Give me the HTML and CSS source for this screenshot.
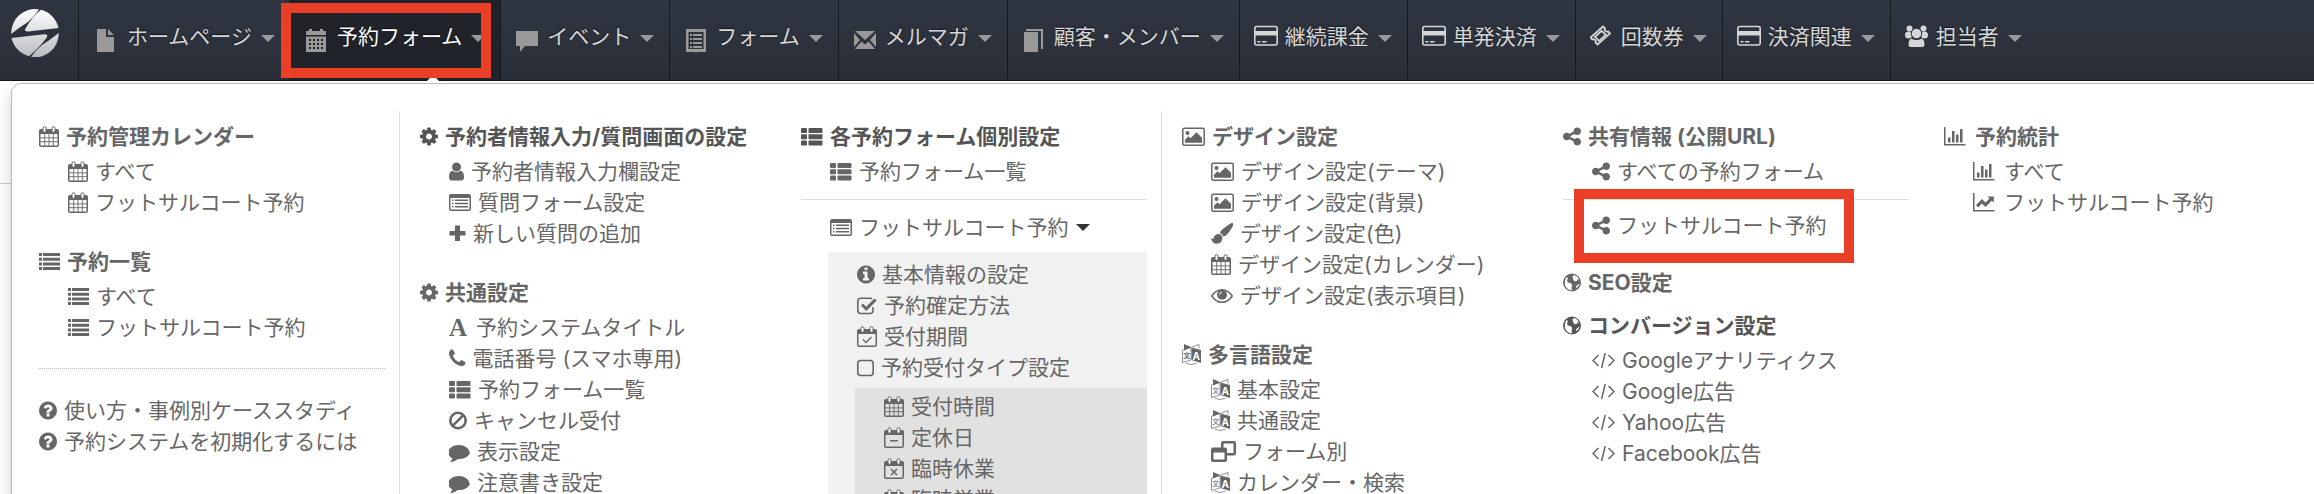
FILE: index.html
```html
<!DOCTYPE html>
<html lang="ja">
<head>
    <meta charset="UTF-8">
    <meta name="viewport" content="width=device-width, initial-scale=1.0">
    <title>予約フォーム</title>
    <link rel="stylesheet" href="styles.css">
</head>
<body>
    <!-- アイコン定義 -->
    <svg class="icon-defs" aria-hidden="true">
        <defs>
            <g id="i-cal-base">
                <path fill-rule="evenodd" d="M2 3h16q2 0 2 2v14q0 2-2 2h-16q-2 0-2-2v-14q0-2 2-2zM1.5 8v11.5h17v-11.5z"/>
                <rect x="4" y=".7" width="3" height="5.6" rx="1.5" fill="#fff" stroke="currentColor"/>
                <rect x="13" y=".7" width="3" height="5.6" rx="1.5" fill="#fff" stroke="currentColor"/>
            </g>
            <g id="i-cal-grid">
                <use href="#i-cal-base"/>
                <path d="M1 11.9h18M1 15.7h18M5.7 8v12M10 8v12M14.3 8v12" fill="none" stroke="currentColor" stroke-width=".9"/>
            </g>
            <g id="i-cal-check">
                <use href="#i-cal-base"/>
                <path d="M6 13.5l3 3 5.5-5.5" fill="none" stroke="currentColor" stroke-width="1.4"/>
            </g>
            <g id="i-cal-minus">
                <use href="#i-cal-base"/>
                <path d="M6 13.8h8" fill="none" stroke="currentColor" stroke-width="1.5"/>
            </g>
            <g id="i-cal-times">
                <use href="#i-cal-base"/>
                <path d="M7 11l6 6M13 11l-6 6" fill="none" stroke="currentColor" stroke-width="1.6"/>
            </g>
            <path id="i-cog" d="M1152 896q0-106-75-181t-181-75-181 75-75 181 75 181 181 75 181-75 75-181zm512-109v222q0 12-8 23t-20 13l-185 28q-19 54-39 91 35 50 107 138 10 12 10 25t-9 23q-27 37-99 108t-94 71q-12 0-26-9l-138-108q-44 23-91 38-16 136-29 186-7 28-36 28h-222q-14 0-24.5-8.5t-11.5-21.5l-28-184q-49-16-90-37l-141 107q-10 9-25 9-14 0-25-11-126-114-165-168-7-10-7-23 0-12 8-23 15-21 51-66.5t54-70.5q-27-50-41-99l-183-27q-13-2-21-12.5t-8-23.5v-222q0-12 8-23t19-13l186-28q14-46 39-92-40-57-107-138-10-12-10-24 0-10 9-23 26-36 98.5-107.5t94.5-71.5q13 0 26 10l138 107q44-23 91-38 16-136 29-186 7-28 36-28h222q14 0 24.5 8.5t11.5 21.5l28 184q49 16 90 37l142-107q9-9 24-9 13 0 25 10 129 119 165 170 7 8 7 22 0 12-8 23-15 21-51 66.5t-54 70.5q26 50 41 98l183 28q13 2 21 12.5t8 23.5z"/>
            <path id="i-user" d="M1536 1399q0 109-62.5 187t-150.5 78h-854q-88 0-150.5-78t-62.5-187q0-85 8.5-160.5t31.5-152 58.5-131 94-89 134.5-34.5q131 128 313 128t313-128q76 0 134.5 34.5t94 89 58.5 131 31.5 152 8.5 160.5zm-256-887q0 159-112.5 271.5t-271.5 112.5-271.5-112.5-112.5-271.5 112.5-271.5 271.5-112.5 271.5 112.5 112.5 271.5z"/>
            <path id="i-comment" d="M1792 896q0 174-120 321.5t-326 233-450 85.5q-70 0-145-8-198 175-460 242-49 14-114 22-17 2-30.5-9t-17.5-29q-3-15 12-31 80-80 110-150 20-50 28-90-157-89-247.5-220t-90.5-281q0-130 71-248.5t191-204.5 286-136.5 348-50.5q244 0 450 85.5t326 233 120 321.5z"/>
            <path id="i-phone" d="M1600 1240q0 27-10 70.5t-21 68.5q-21 50-122 106-94 51-186 51-27 0-53-3.5t-57.5-12.5-47-14.5-55.5-20.5-49-18q-98-35-175-83-127-79-264-216t-216-264q-48-77-83-175-3-9-18-49t-20.5-55.5-14.5-47-12.5-57.5-3.5-53q0-92 51-186 56-101 106-122 25-11 68.5-21t70.5-10q14 0 21 3 18 6 53 76 11 19 30 54t35 63.5 31 53.5q3 4 17.5 25t21.5 35.5 7 28.5q0 20-28.5 50t-62 55-62 53-28.5 46q0 9 5 22.5t8.5 20.5 14 24 11.5 19q76 137 174 235t235 174q2 1 19 11.5t24 14 20.5 8.5 22.5 5q18 0 46-28.5t53-62 55-62 50-28.5q14 0 28.5 7t35.5 21.5 25 17.5q25 15 53.5 31t63.5 35 54 30q70 35 76 53 3 7 3 21z"/>
            <path id="i-share" d="M1344 1024q133 0 226.5 93.5t93.5 226.5-93.5 226.5-226.5 93.5-226.5-93.5-93.5-226.5q0-12 2-34l-360-180q-92 86-218 86-133 0-226.5-93.5t-93.5-226.5 93.5-226.5 226.5-93.5q126 0 218 86l360-180q-2-22-2-34 0-133 93.5-226.5t226.5-93.5 226.5 93.5 93.5 226.5-93.5 226.5-226.5 93.5q-126 0-218-86l-360 180q2 22 2 34t-2 34l360 180q92-86 218-86z"/>
            <path id="i-question" d="M1024 1376v-192q0-14-9-23t-23-9h-192q-14 0-23 9t-9 23v192q0 14 9 23t23 9h192q14 0 23-9t9-23zm256-672q0-88-55.5-163t-138.5-116-170-41q-243 0-371 213-15 24 8 42l132 100q7 6 19 6 16 0 25-12 53-68 86-92 34-24 86-24 48 0 85.5 26t37.5 59q0 38-20 61t-68 45q-63 28-115.5 86.5t-52.5 125.5v36q0 14 9 23t23 9h192q14 0 23-9t9-23q0-19 21.5-49.5t54.5-49.5q32-18 49-28.5t46-35 44.5-48 28-60.5 12.5-81zm384 192q0 209-103 385.5t-279.5 279.5-385.5 103-385.5-103-279.5-279.5-103-385.5 103-385.5 279.5-279.5 385.5-103 385.5 103 279.5 279.5 103 385.5z"/>
            <path id="i-info" d="M1152 1376v-160q0-14-9-23t-23-9h-96v-512q0-14-9-23t-23-9h-320q-14 0-23 9t-9 23v160q0 14 9 23t23 9h96v320h-96q-14 0-23 9t-9 23v160q0 14 9 23t23 9h448q14 0 23-9t9-23zm-128-896v-160q0-14-9-23t-23-9h-192q-14 0-23 9t-9 23v160q0 14 9 23t23 9h192q14 0 23-9t9-23zm640 416q0 209-103 385.5t-279.5 279.5-385.5 103-385.5-103-279.5-279.5-103-385.5 103-385.5 279.5-279.5 385.5-103 385.5 103 279.5 279.5 103 385.5z"/>
            <path id="i-list" d="M0 2h3v3h-3zM4 2h17v3h-17zM0 6.7h3v3h-3zM4 6.7h17v3h-17zM0 11.4h3v3h-3zM4 11.4h17v3h-17zM0 16.1h3v3h-3zM4 16.1h17v3h-17z"/>
            <g id="i-th-list">
                <rect x="0" y="2" width="6" height="5" rx="1"/><rect x="7.5" y="2" width="14" height="5" rx="1"/>
                <rect x="0" y="8.3" width="6" height="5" rx="1"/><rect x="7.5" y="8.3" width="14" height="5" rx="1"/>
                <rect x="0" y="14.6" width="6" height="5" rx="1"/><rect x="7.5" y="14.6" width="14" height="5" rx="1"/>
            </g>
            <path id="i-list-alt" fill-rule="evenodd" d="M2 2h18q2 0 2 2v13q0 2-2 2h-18q-2 0-2-2v-13q0-2 2-2zM1.5 6v11q0 .5.5.5h18q.5 0 .5-.5v-11zM3 7.5h1.5v1.5h-1.5zM6 7.5h13v1.5h-13zM3 10.7h1.5v1.5h-1.5zM6 10.7h13v1.5h-13zM3 14h1.5v1.5h-1.5zM6 14h13v1.5h-13z"/>
            <path id="i-plus" d="M6 2.5h5v5.5h5.5v4.5h-5.5v5.5h-5v-5.5h-5.5v-4.5h5.5z"/>
            <g id="i-ban" fill="none" stroke="currentColor" stroke-width="2.6">
                <circle cx="9" cy="10.5" r="7.7"/><path d="M14.4 5.1l-10.8 10.8"/>
            </g>
            <g id="i-check">
                <path d="M16 12v3.5q0 3-3 3h-9.2q-3 0-3-3v-9.2q0-3 3-3h9.2q1 0 2 .5" fill="none" stroke="currentColor" stroke-width="1.6"/>
                <path d="M4 10.5l2-2 3.2 3.2 8.3-8.3 2.2 2.2-10.5 10.5z"/>
            </g>
            <rect id="i-square" x=".8" y="3.5" width="15.4" height="15" rx="3" fill="none" stroke="currentColor" stroke-width="1.6"/>
            <g id="i-image">
                <rect x=".8" y="2.3" width="21.4" height="17" rx="1.5" fill="none" stroke="currentColor" stroke-width="1.5"/>
                <circle cx="5.5" cy="7" r="2"/><path d="M3 16.8v-3l3.5-3.5 2 2 6-6 5.5 5.5v5z"/>
            </g>
            <g id="i-brush">
                <path d="M21.5 0q1.5 1 .3 3.2-2.8 5.5-6.3 8.8-1.5 1.4-3.2 1.6-.5-2.5-3.3-3.6.2-1.6 2-3.2 4.5-4 8.5-6.3 1.2-.8 2-.5z"/>
                <path d="M8 11q3.2.8 3.4 4-.2 5.5-5.7 5.8-4.7-.1-5.7-5.8 1.5 1.2 2.5.7.4-4.7 5.5-4.7z"/>
            </g>
            <g id="i-eye">
                <path d="M.8 11q4-6.2 10.2-6.2t10.2 6.2q-4 6.2-10.2 6.2t-10.2-6.2z" fill="none" stroke="currentColor" stroke-width="1.5"/>
                <circle cx="11" cy="9.8" r="5"/><path d="M8.3 9.8q.2-2.4 2.7-2.7" fill="none" stroke="#fff" stroke-width=".9"/>
            </g>
            <g id="i-lang">
                <path d="M2 0l7.5 3.2-7.5 3.3z"/>
                <path d="M9.5 3.2l7.5-2.7v4M.5 6l8.5-2.5v12.5l-8.5 2.5zM3.5 19q5.5 3 11 .3" fill="none" stroke="currentColor" stroke-width=".7"/>
                <path d="M9.5 3.4l9.5 2.6v13l-9.5-3z"/>
                <text x="1.2" y="14" font-size="7">文</text>
                <text x="10.5" y="15.5" font-size="10" class="lang-a">A</text>
            </g>
            <path id="i-restore" fill-rule="evenodd" d="M12 0h11q2 0 2 2v10.5q0 2-2 2h-7v4.500q0 2-2 2h-12q-2 0-2-2v-10.5q0-2 2-2h8v-4.500q0-2 2-2zM12.500 2.500v4h1.500q2 0 2 2v3.500h6.500v-9.500zM2.500 11.500v7h11v-7z"/>
            <path id="i-globe" fill-rule="evenodd" d="M9 1.5a9 9 0 0 1 0 18a9 9 0 0 1 0-18zM3.500 5l1.500 1.200-1 2 .8 2.300 2.700.6 1.700 2-.7 3 .7 2.300q-5.800-.3-7.400-6-.6-4.300 1.700-7.400zM9.500 4.300l2-1.300q3.500 1.300 4.700 4.800l-1.500-.6-.7 1.800-2.500.3-1.500-2.300zM15.300 12.300l1.200-.5q-.8 3-3 4.500l-.5-2z"/>
            <path id="i-code" d="M6.5 5l-5.5 5.5 5.5 5.5M16.5 5l5.5 5.5-5.5 5.5M13.2 3l-3.6 15" fill="none" stroke="currentColor" stroke-width="1.5"/>
            <path id="i-bars" d="M0 1h1.5v17h20v1.5h-21.5zM4 11.5h2.5v5h-2.5zM8 5h2.5v11.5h-2.5zM12 8.5h2.5v8h-2.5zM16 3h2.5v13.5h-2.5z"/>
            <path id="i-line" d="M0 1h1.5v17h20v1.5h-21.5zM3 13l6-6 3.5 3.5 4-4-2-2h6.3v6.3l-2-2-6.3 6.2-3.5-3.5-4 4z"/>
            <g id="i-card">
                <rect x=".8" y="1.5" width="22.4" height="18.5" rx="2" fill="none" stroke="currentColor" stroke-width="1.6"/>
                <path d="M1 6h22v4.5h-22zM3.5 16h3v1.5h-3zM8 16h4.5v1.5h-4.5z"/>
            </g>
            <g id="i-ticket" fill="none" stroke="currentColor" stroke-width="1.8">
                <path d="M13 1.5l2 2q-.8 2 .7 2.8 1.2.8 2.6.2l1.700 2-12.500 11-2-2q.8-2-.7-2.800-1.200-.8-2.600-.2l-1.700-2z"/>
                <path d="M11.7 5.8l4 4-6.700 6-4-4z"/>
            </g>
            <g id="i-users">
                <circle cx="4.5" cy="3.5" r="3"/><circle cx="18.5" cy="3.5" r="3"/>
                <circle cx="3.5" cy="10" r="3.5"/><circle cx="19.5" cy="10" r="3.5"/>
                <circle cx="11.5" cy="8.5" r="5.2" stroke="#2d333e"/>
                <path d="M6 13.5q5.5 3 11 0 2.5 1.5 2.5 6 0 2.5-2.500 2.500h-11q-2.500 0-2.500-2.500 0-4.500 2.500-6z"/>
            </g>
            <path id="i-doc" d="M0 1h9v8h8v15h-17zM11 1l6 6h-6z"/>
            <path id="i-old-cal" fill-rule="evenodd" d="M0 3h3v-2h3v2h8v-2h3v2h3v4h-20zM0 8.5h20v15.5h-20zM3 11v2h2v-2zM7 11v2h2v-2zM11 11v2h2v-2zM15 11v2h2v-2zM3 15v2h2v-2zM7 15v2h2v-2zM11 15v2h2v-2zM15 15v2h2v-2zM3 19v2h2v-2zM7 19v2h2v-2zM11 19v2h2v-2zM15 19v2h2v-2z"/>
            <path id="i-balloon" d="M0 3h22v15h-13l-5 6v-6h-4z"/>
            <path id="i-form" fill-rule="evenodd" d="M0 1h20v23h-20zM2.5 4v17h15v-17zM4 6h2v2h-2zM7 6h9v2h-9zM4 10h2v2h-2zM7 10h9v2h-9zM4 14h2v2h-2zM7 14h9v2h-9zM4 18h2v2h-2zM7 18h9v2h-9z"/>
            <path id="i-mail" d="M1 3h20l-10 9zM0 5l6 7-6 7zM22 5l-6 7 6 7zM1 21l6.5-7.5 3.5 3 3.5-3 6.5 7.5z"/>
            <path id="i-book" d="M0 4h14v20h-14zM2 1h17v20h-2v-18h-15z"/>
        </defs>
    </svg>

    <header class="header">
        <a href="#" class="logo" aria-label="トップ">
            <svg viewBox="0 0 48 48">
                <defs>
                    <linearGradient id="logo-fill" x1="0" y1="0" x2="0" y2="48" gradientUnits="userSpaceOnUse">
                        <stop offset="0" stop-color="#fff"/>
                        <stop offset="1" stop-color="#b9bbbf"/>
                    </linearGradient>
                </defs>
                <g fill="url(#logo-fill)">
                    <path d="M.2 25A24 24 0 0 1 28 .4Q23 8 17 13Q9 18 .2 25z"/>
                    <path d="M30 .8A24 24 0 0 1 47.5 19L17 22.5Q12.5 22.5 14.5 19.5Q21 8 30 .8z"/>
                    <path d="M47.8 24A24 24 0 0 1 20 48Q25 41 31 36Q39 31 47.8 24z"/>
                    <path d="M18 47.2A24 24 0 0 1 .5 29L31 25.5Q38.5 24.5 35.5 29Q27 40 18 47.2z"/>
                </g>
            </svg>
        </a>
        <nav>
            <ul class="nav">
                <li class="nav-item"><a href="#"><svg class="nav-img" viewBox="-1 0 22 24"><use href="#i-doc"/></svg>ホームページ<span class="caret"></span></a></li>
                <li class="nav-item active">
                    <a href="#"><svg class="nav-img" viewBox="0 0 22 24"><use href="#i-old-cal"/></svg>予約フォーム<span class="caret"></span></a>
                    <span class="arrow"></span>
                    <span class="frame frame-nav"></span>
                </li>
                <li class="nav-item"><a href="#"><svg class="nav-img" viewBox="0 0 22 24"><use href="#i-balloon"/></svg>イベント<span class="caret"></span></a></li>
                <li class="nav-item"><a href="#"><svg class="nav-img" viewBox="-1 0 22 24"><use href="#i-form"/></svg>フォーム<span class="caret"></span></a></li>
                <li class="nav-item"><a href="#"><svg class="nav-img" viewBox="0 0 22 24"><use href="#i-mail"/></svg>メルマガ<span class="caret"></span></a></li>
                <li class="nav-item"><a href="#"><svg class="nav-img" viewBox="-1 0 22 24"><use href="#i-book"/></svg>顧客・メンバー<span class="caret"></span></a></li>
                <li class="nav-item"><a href="#"><svg class="nav-icon" viewBox="0 0 24 22"><use href="#i-card"/></svg>継続課金<span class="caret"></span></a></li>
                <li class="nav-item"><a href="#"><svg class="nav-icon" viewBox="0 0 24 22"><use href="#i-card"/></svg>単発決済<span class="caret"></span></a></li>
                <li class="nav-item"><a href="#"><svg class="nav-icon" viewBox="0 0 24 22"><use href="#i-ticket"/></svg>回数券<span class="caret"></span></a></li>
                <li class="nav-item"><a href="#"><svg class="nav-icon" viewBox="0 0 24 22"><use href="#i-card"/></svg>決済関連<span class="caret"></span></a></li>
                <li class="nav-item"><a href="#"><svg class="nav-icon" viewBox="0 0 24 22"><use href="#i-users"/></svg>担当者<span class="caret"></span></a></li>
            </ul>
        </nav>
    </header>

    <main class="page">
        <div class="mega">
            <div class="col divided">
                <section class="group">
                    <h3><a href="#"><svg viewBox="0 0 20 21"><use href="#i-cal-grid"/></svg>予約管理カレンダー</a></h3>
                    <ul class="menu">
                        <li><a href="#"><svg viewBox="0 0 20 21"><use href="#i-cal-grid"/></svg>すべて</a></li>
                        <li><a href="#"><svg viewBox="0 0 20 21"><use href="#i-cal-grid"/></svg>フットサルコート予約</a></li>
                    </ul>
                </section>
                <section class="group">
                    <h3><a href="#"><svg viewBox="0 0 21 21"><use href="#i-list"/></svg>予約一覧</a></h3>
                    <ul class="menu">
                        <li><a href="#"><svg viewBox="0 0 21 21"><use href="#i-list"/></svg>すべて</a></li>
                        <li><a href="#"><svg viewBox="0 0 21 21"><use href="#i-list"/></svg>フットサルコート予約</a></li>
                    </ul>
                </section>
                <hr class="dotted">
                <ul class="help">
                    <li><a href="#"><svg viewBox="128 0 1536 1792"><use href="#i-question"/></svg>使い方・事例別ケーススタディ</a></li>
                    <li><a href="#"><svg viewBox="128 0 1536 1792"><use href="#i-question"/></svg>予約システムを初期化するには</a></li>
                </ul>
            </div>

            <div class="col">
                <section class="group">
                    <h3 class="title"><svg viewBox="128 0 1536 1792"><use href="#i-cog"/></svg>予約者情報入力/質問画面の設定</h3>
                    <ul class="menu">
                        <li><a href="#"><svg viewBox="256 0 1280 1792"><use href="#i-user"/></svg>予約者情報入力欄設定</a></li>
                        <li><a href="#"><svg viewBox="0 0 22 21"><use href="#i-list-alt"/></svg>質問フォーム設定</a></li>
                        <li><a href="#"><svg viewBox="0 0 17 21"><use href="#i-plus"/></svg>新しい質問の追加</a></li>
                    </ul>
                </section>
                <section class="group">
                    <h3><a href="#"><svg viewBox="128 0 1536 1792"><use href="#i-cog"/></svg>共通設定</a></h3>
                    <ul class="menu">
                        <li><a href="#"><span class="letter">A</span>予約システムタイトル</a></li>
                        <li><a href="#"><svg viewBox="192 0 1408 1792"><use href="#i-phone"/></svg>電話番号 (スマホ専用)</a></li>
                        <li><a href="#"><svg viewBox="0 0 22 21"><use href="#i-th-list"/></svg>予約フォーム一覧</a></li>
                        <li><a href="#"><svg viewBox="0 0 18 21"><use href="#i-ban"/></svg>キャンセル受付</a></li>
                        <li><a href="#"><svg viewBox="0 0 1792 1792"><use href="#i-comment"/></svg>表示設定</a></li>
                        <li><a href="#"><svg viewBox="0 0 1792 1792"><use href="#i-comment"/></svg>注意書き設定</a></li>
                    </ul>
                </section>
            </div>

            <div class="col divided">
                <section class="group">
                    <h3 class="title"><svg viewBox="0 0 22 21"><use href="#i-th-list"/></svg>各予約フォーム個別設定</h3>
                    <ul class="menu">
                        <li><a href="#"><svg viewBox="0 0 22 21"><use href="#i-th-list"/></svg>予約フォーム一覧</a></li>
                    </ul>
                    <hr>
                    <ul class="menu">
                        <li>
                            <a href="#"><svg viewBox="0 0 22 21"><use href="#i-list-alt"/></svg>フットサルコート予約<span class="caret"></span></a>
                            <ul class="menu sub">
                                <li><a href="#"><svg viewBox="128 0 1536 1792"><use href="#i-info"/></svg>基本情報の設定</a></li>
                                <li><a href="#"><svg viewBox="0 0 20 21"><use href="#i-check"/></svg>予約確定方法</a></li>
                                <li><a href="#"><svg viewBox="0 0 20 21"><use href="#i-cal-check"/></svg>受付期間</a></li>
                                <li>
                                    <a href="#"><svg viewBox="0 0 17 21"><use href="#i-square"/></svg>予約受付タイプ設定</a>
                                    <ul class="menu sub-inner">
                                        <li><a href="#"><svg viewBox="0 0 20 21"><use href="#i-cal-grid"/></svg>受付時間</a></li>
                                        <li><a href="#"><svg viewBox="0 0 20 21"><use href="#i-cal-minus"/></svg>定休日</a></li>
                                        <li><a href="#"><svg viewBox="0 0 20 21"><use href="#i-cal-times"/></svg>臨時休業</a></li>
                                        <li><a href="#"><svg viewBox="0 0 20 21"><use href="#i-cal-check"/></svg>臨時営業</a></li>
                                    </ul>
                                </li>
                            </ul>
                        </li>
                    </ul>
                </section>
            </div>

            <div class="col">
                <section class="group">
                    <h3><a href="#"><svg viewBox="0 0 23 21"><use href="#i-image"/></svg>デザイン設定</a></h3>
                    <ul class="menu">
                        <li><a href="#"><svg viewBox="0 0 23 21"><use href="#i-image"/></svg>デザイン設定(テーマ)</a></li>
                        <li><a href="#"><svg viewBox="0 0 23 21"><use href="#i-image"/></svg>デザイン設定(背景)</a></li>
                        <li><a href="#"><svg viewBox="0 0 22 21"><use href="#i-brush"/></svg>デザイン設定(色)</a></li>
                        <li><a href="#"><svg viewBox="0 0 20 21"><use href="#i-cal-grid"/></svg>デザイン設定(カレンダー)</a></li>
                        <li><a href="#"><svg viewBox="0 0 22 21"><use href="#i-eye"/></svg>デザイン設定(表示項目)</a></li>
                    </ul>
                </section>
                <section class="group">
                    <h3><a href="#"><svg viewBox="0 0 19 21"><use href="#i-lang"/></svg>多言語設定</a></h3>
                    <ul class="menu">
                        <li><a href="#"><svg viewBox="0 0 19 21"><use href="#i-lang"/></svg>基本設定</a></li>
                        <li><a href="#"><svg viewBox="0 0 19 21"><use href="#i-lang"/></svg>共通設定</a></li>
                        <li><a href="#"><svg viewBox="0 0 25 21"><use href="#i-restore"/></svg>フォーム別</a></li>
                        <li><a href="#"><svg viewBox="0 0 19 21"><use href="#i-lang"/></svg>カレンダー・検索</a></li>
                    </ul>
                </section>
            </div>

            <div class="col">
                <section class="group">
                    <h3><a href="#"><svg viewBox="128 0 1536 1792"><use href="#i-share"/></svg>共有情報 (公開URL)</a></h3>
                    <ul class="menu">
                        <li><a href="#"><svg viewBox="128 0 1536 1792"><use href="#i-share"/></svg>すべての予約フォーム</a></li>
                    </ul>
                    <hr class="tight">
                    <ul class="menu">
                        <li><a href="#"><svg viewBox="128 0 1536 1792"><use href="#i-share"/></svg>フットサルコート予約</a><span class="frame frame-share"></span></li>
                    </ul>
                </section>
                <section class="group seo">
                    <h3><a href="#"><svg viewBox="0 0 18 21"><use href="#i-globe"/></svg>SEO設定</a></h3>
                </section>
                <section class="group conversion">
                    <h3 class="title"><svg viewBox="0 0 18 21"><use href="#i-globe"/></svg>コンバージョン設定</h3>
                    <ul class="menu">
                        <li><a href="#"><svg viewBox="0 0 23 21"><use href="#i-code"/></svg>Googleアナリティクス</a></li>
                        <li><a href="#"><svg viewBox="0 0 23 21"><use href="#i-code"/></svg>Google広告</a></li>
                        <li><a href="#"><svg viewBox="0 0 23 21"><use href="#i-code"/></svg>Yahoo広告</a></li>
                        <li><a href="#"><svg viewBox="0 0 23 21"><use href="#i-code"/></svg>Facebook広告</a></li>
                    </ul>
                </section>
            </div>

            <div class="col">
                <section class="group">
                    <h3><a href="#"><svg viewBox="0 0 24 21"><use href="#i-bars"/></svg>予約統計</a></h3>
                    <ul class="menu">
                        <li><a href="#"><svg viewBox="0 0 24 21"><use href="#i-bars"/></svg>すべて</a></li>
                        <li><a href="#"><svg viewBox="0 0 24 21"><use href="#i-line"/></svg>フットサルコート予約</a></li>
                    </ul>
                </section>
            </div>
        </div>
    </main>
</body>
</html>
```

FILE: styles.css
```css
* {
    margin: 0;
    padding: 0;
    box-sizing: border-box;
}

body {
    font-family: Inter, "Noto Sans CJK JP", sans-serif;
    font-size: 21px;
    line-height: 31px;
    color: #666;
    background: #fff;
    height: 100vh;
    overflow: hidden;
}

ul {
    list-style: none;
}

a {
    color: inherit;
    text-decoration: none;
}

svg {
    flex: none;
    fill: currentColor;
}

.icon-defs {
    position: absolute;
    width: 0;
    height: 0;
}

/* ヘッダー */
.header {
    display: flex;
    color: #d6d6d6;
    background: linear-gradient(#2f3641, #2a2e38);
    border-bottom: 1px solid #14161b;
}

.logo {
    width: 78px;
    padding: 9px 11px;
}

.logo svg {
    display: block;
    width: 48px;
    height: 48px;
}

.nav {
    display: flex;
}

.nav-item {
    position: relative;
    border-left: 1px solid #15181e;
}

.nav-item a {
    display: flex;
    align-items: center;
    height: 80px;
    padding: 0 15px 8px 14px;
    white-space: nowrap;
    text-shadow: 0 -1px 1px rgba(0,0,0,0.6);
}

.nav-item:first-child a {
    padding-left: 16px;
}

.nav-item.active {
    color: #fff;
    background: #202329;
}

.nav-img {
    width: 22px;
    height: 24px;
    margin: 8px 9px 0 1px;
    color: #999;
}

.nav-icon {
    width: 24px;
    height: 22px;
    margin-right: 7px;
}

.caret {
    flex: none;
    margin-left: 9px;
    border: 7px solid transparent;
    border-top-color: #333;
    border-bottom: 0;
}

.nav .caret {
    margin-top: 5px;
    border-top-color: #999;
}

.arrow {
    position: absolute;
    left: 134px;
    bottom: -3px;
    border: 8px solid transparent;
    border-top: 0;
    border-bottom-color: #fff;
}

.frame {
    position: absolute;
    border: 10px solid #e93f26;
    pointer-events: none;
}

.frame-nav {
    top: 3px;
    left: -10px;
    width: 210px;
    height: 75px;
}

.frame-share {
    top: -21px;
    left: -16px;
    width: 280px;
    height: 74px;
}

/* メガメニュー */
.page {
    padding: 2px 0 0 11px;
    background: linear-gradient(#ccc, #ccc) 0 102px / 100% 1px no-repeat;
}

.mega {
    display: grid;
    grid-template-columns: repeat(6, minmax(0, 1fr));
    gap: 20px;
    margin-right: -12px;
    padding: 27px 20px 27px 27px;
    background: #fff;
    border: 1px solid #bbb;
    border-radius: 10px;
    box-shadow: 0 8px 16px rgba(0,0,0,0.2);
}

.col {
    padding: 10px 14px 0 0;
    border-right: 1px solid transparent;
    white-space: nowrap;
}

.col.divided {
    border-right-color: #ddd;
}

.group + .group {
    margin-top: 28px;
}

.group + .seo {
    margin-top: 26px;
}

.group + .conversion {
    margin-top: 12px;
}

h3 {
    font-size: 21px;
    margin-bottom: 4px;
}

h3 a,
.title,
.menu a,
.help a {
    display: flex;
    align-items: center;
    gap: 7px;
}

.title {
    color: #555;
}

.col svg {
    height: 21px;
}

.menu {
    padding-left: 27px;
}

.menu li {
    position: relative;
}

.menu a {
    padding-left: 2px;
}

.menu .caret {
    margin-left: 0;
}

.sub {
    margin-top: 9px;
    padding-top: 7px;
    background: #f1f1f1;
}

.sub-inner {
    margin-top: 5px;
    padding-top: 3px;
    background: #e1e1e1;
}

.letter {
    width: 20px;
    font: bold 25px/31px "Liberation Serif", serif;
}

.lang-a {
    fill: #fff;
    font-weight: bold;
}

hr {
    margin: 12px 0;
    border: 0;
    border-top: 1px solid #ddd;
}

hr.tight {
    margin-bottom: 10px;
}

hr.dotted {
    margin: 25px 0 26px;
    border-top: 1px dotted #bbb;
}
```
